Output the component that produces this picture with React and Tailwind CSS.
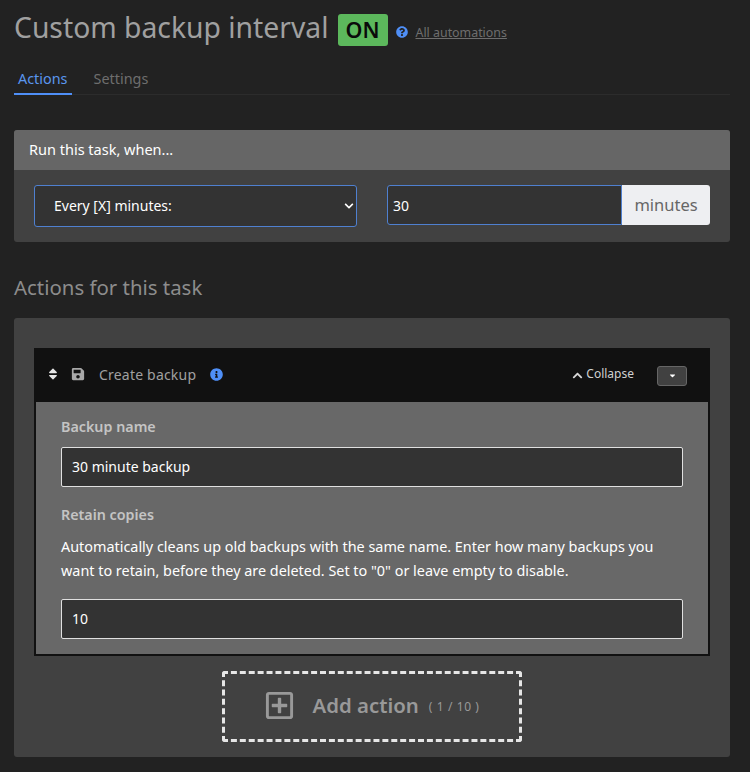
import { FaQuestionCircle, FaSort, FaSave, FaInfoCircle, FaChevronUp, FaChevronDown, FaCaretDown, FaRegPlusSquare } from 'react-icons/fa';

const font = { fontFamily: '"Noto Sans", sans-serif' };

function ActionCard() {
  return (
    <div className="border-2 border-t-0 border-[#111111] bg-[#686868]">
      <div className="-mx-[2px] flex h-[54px] items-center bg-[#111111] pl-[12px] pr-[23px]">
        <div className="mb-[2px] flex items-center">
          <FaSort className="text-[14px] text-[#e6e6e6]" />
          <FaSave className="ml-[11px] text-[14px] text-[#a8a8a8]" />
          <span className="ml-[14px] text-[14px] tracking-[0.2px] text-[#a0a0a0]">Create backup</span>
          <FaInfoCircle className="ml-[14px] text-[13px] text-[#4f8ff7]" />
        </div>
        <div className="ml-auto flex items-center">
          <FaChevronUp className="text-[11px] text-[#d8d8d8]" />
          <span className="ml-[3px] mb-[2px] text-[12px] text-[#d0d0d0]">Collapse</span>
          <div className="ml-[23px] mt-[1px] flex h-[20px] w-[30px] items-center justify-center rounded-[3px] border border-[#666666] bg-[#414141]">
            <FaCaretDown className="text-[9px] text-white" />
          </div>
        </div>
      </div>
      <div className="px-[25px] pb-[15px] pt-[15px]">
        <label className="block text-[14.3px] leading-[20px] font-semibold text-[#c4c4c4]">Backup name</label>
        <input
          defaultValue="30 minute backup"
          className="mt-[10px] block h-[40px] w-full rounded-[2px] border border-[#e0e0e0] bg-[#333333] px-[10px] pb-[2px] text-[14px] text-white outline-none"
        />
        <label className="mt-[18px] block text-[14.3px] leading-[20px] font-semibold text-[#c4c4c4]">Retain copies</label>
        <p className="mt-[10px] text-[14.4px] leading-[24px] text-white">
          Automatically cleans up old backups with the same name. Enter how many backups you want to retain, before they are deleted. Set to "0" or leave empty to disable.
        </p>
        <input
          defaultValue="10"
          className="mt-[16px] block h-[40px] w-full rounded-[2px] border border-[#e0e0e0] bg-[#333333] px-[10px] pb-[2px] text-[14px] text-white outline-none"
        />
      </div>
    </div>
  );
}

export default function App() {
  return (
    <div className="min-h-[772px] overflow-hidden bg-[#222222] pl-[14px] pr-[20px] pt-[8px] pb-[15px]" style={font}>
      <div className="flex items-center">
        <h1 className="text-[28.3px] leading-[36px] font-normal text-[#a0a0a0]">Custom backup interval</h1>
        <span className="ml-[9px] mt-[6px] flex h-[32px] w-[50px] items-center justify-center rounded-[3px] bg-[#5cb85c] text-[21.5px] font-semibold text-[#0a0a0a]">ON</span>
        <FaQuestionCircle className="ml-[8px] mt-[10px] text-[12px] text-[#4f8ff7]" />
        <a className="ml-[8px] mt-[12px] text-[12.4px] text-[#6e6e6e] underline">All automations</a>
      </div>

      <div className="mt-[21px] flex border-b border-[#2c2c2c] text-[14.4px]">
        <div className="-mb-px border-b-2 border-[#4f8ff7] px-[4px] pb-[2px] leading-[24px] text-[#5a96ef]">Actions</div>
        <div className="ml-[22px] leading-[24px] text-[#6e6e6e]">Settings</div>
      </div>

      <section className="mt-[35px] overflow-hidden rounded-[3px] bg-[#414141]">
        <div className="flex h-[40px] items-center bg-[#666666] px-[15px] text-[14.5px] text-white">Run this task, when...</div>
        <div className="flex items-start px-[20px] pb-[15px] pt-[15px]">
          <div className="relative w-[323px]">
            <select className="block h-[42px] w-full appearance-none rounded-[3px] border border-[#4f80d0] bg-[#333333] pb-[2px] pl-[19px] text-[14px] text-white outline-none">
              <option>Every [X] minutes:</option>
            </select>
            <FaChevronDown className="absolute right-[3px] top-[16px] text-[10px] text-white" />
          </div>
          <div className="ml-[30px] flex flex-1">
            <input
              defaultValue="30"
              className="h-[40px] min-w-0 flex-1 rounded-l-[3px] border border-[#4f80d0] bg-[#333333] px-[5px] text-[14px] text-white outline-none"
            />
            <div className="flex h-[40px] w-[88px] items-center justify-center rounded-r-[3px] bg-[#eeeff2] text-[16.5px] text-[#666666]">minutes</div>
          </div>
        </div>
      </section>

      <h2 className="mt-[31px] text-[20.4px] leading-[28px] font-normal text-[#8c8c8c]">Actions for this task</h2>

      <section className="mt-[17px] rounded-[3px] bg-[#414141] px-[20px] pb-[15px] pt-[30px]">
        <ActionCard />
        <div className="mt-[15px] flex justify-center">
          <div className="flex h-[71px] w-[300px] items-center justify-center rounded-[3px] border-[3px] border-dashed border-[#e6e6e6] pb-[2px]">
            <FaRegPlusSquare className="text-[31px] text-[#999999]" />
            <span className="ml-[17px] text-[20.4px] font-semibold text-[#999999]">Add action</span>
            <span className="ml-[10px] mt-[2px] text-[12px] tracking-[0.6px] text-[#999999]">( 1 / 10 )</span>
          </div>
        </div>
      </section>
    </div>
  );
}
